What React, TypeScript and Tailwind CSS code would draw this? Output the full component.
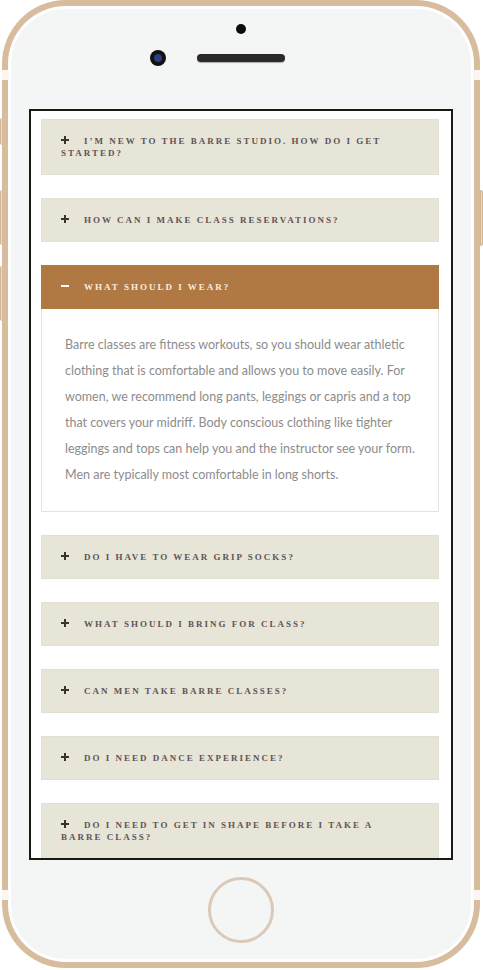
import React from "react";

const items = [
  "I’M NEW TO THE BARRE STUDIO. HOW DO I GET STARTED?",
  "HOW CAN I MAKE CLASS RESERVATIONS?",
  "WHAT SHOULD I WEAR?",
  "DO I HAVE TO WEAR GRIP SOCKS?",
  "WHAT SHOULD I BRING FOR CLASS?",
  "CAN MEN TAKE BARRE CLASSES?",
  "DO I NEED DANCE EXPERIENCE?",
  "DO I NEED TO GET IN SHAPE BEFORE I TAKE A BARRE CLASS?",
];

function Plus({ color }: { color: string }) {
  return (
    <svg width="8" height="8" viewBox="0 0 8 8" className="inline-block mr-[15px] align-[0px]">
      <rect x="0" y="3" width="8" height="2" fill={color} />
      <rect x="3" y="0" width="2" height="8" fill={color} />
    </svg>
  );
}

function Minus({ color }: { color: string }) {
  return (
    <svg width="8" height="8" viewBox="0 0 8 8" className="inline-block mr-[15px] align-[0px]">
      <rect x="0" y="3" width="8" height="2" fill={color} />
    </svg>
  );
}

export default function App() {
  return (
    <div className="relative w-[483px] h-[970px] bg-white overflow-hidden">
      {/* side buttons */}
      <div className="absolute left-0 top-[118px] w-[3px] h-[27px] rounded-l-[2px] bg-[#e9dccb] border border-[#d2b592]" />
      <div className="absolute left-0 top-[190px] w-[3px] h-[55px] rounded-l-[2px] bg-[#e9dccb] border border-[#d2b592]" />
      <div className="absolute left-0 top-[266px] w-[3px] h-[55px] rounded-l-[2px] bg-[#e9dccb] border border-[#d2b592]" />
      <div className="absolute right-0 top-[190px] w-[3px] h-[56px] rounded-r-[2px] bg-[#e9dccb] border border-[#d2b592]" />

      {/* frame */}
      <div className="absolute left-[2px] top-0 w-[478px] h-[968px] rounded-[64px] bg-[#d7bd9e] p-[6px]">
        <div className="w-full h-full rounded-[58px] bg-white p-[3px]">
          <div className="w-full h-full rounded-[55px] bg-[#f4f6f5] flex flex-col items-center">
            {/* dot */}
            <div className="mt-[15px] w-[10px] h-[10px] rounded-full bg-[#0c0c0c]" />
            {/* camera + speaker */}
            <div className="mt-[16px] flex items-center h-[16px]">
              <div className="w-[16px] h-[16px] rounded-full bg-[#111] flex items-center justify-center">
                <div className="w-[8px] h-[8px] rounded-full bg-[#2b3f7a]" />
              </div>
              <div className="w-[31px]" />
              <div className="w-[88px] h-[8px] rounded-full bg-[#2a2a2a] shadow-[0_1px_1px_rgba(0,0,0,0.3)]" />
              <div className="w-[47px]" />
            </div>
            {/* screen */}
            <div className="mt-[43px] w-[424px] h-[751px] border-2 border-[#19190f] bg-white overflow-hidden">
              <div className="pl-[10px] pr-[12px] pt-[8px] flex flex-col gap-[23px]">
                {items.map((q, i) => {
                  const active = i === 2;
                  return (
                    <div key={i} className="flex flex-col">
                      <div
                        className={
                          active
                            ? "bg-[#b07944] pl-[19px] pr-[26px] py-[15px] text-[9px] leading-[12px] font-bold tracking-[2px] text-[#f6ede0] border border-[#b07944]"
                            : "bg-[#e7e4d8] pl-[19px] pr-[26px] py-[15px] text-[9px] leading-[12px] font-bold tracking-[2px] text-[#5f5454] border border-[#e2dfd3]"
                        }
                        style={{ fontFamily: '"Liberation Serif", "Times New Roman", serif' }}
                      >
                        {active ? <Minus color="#ffffff" /> : <Plus color="#3b3131" />}
                        {q}
                      </div>
                      {active && (
                        <div
                          className="border border-t-0 border-[#e3e3e3] bg-white pl-[23px] pr-[12px] pt-[23px] pb-[23px] text-[12.5px] leading-[26px] text-[#8c8c8c]"
                          style={{ fontFamily: 'Lato, "Liberation Sans", sans-serif' }}
                        >
                          Barre classes are fitness workouts, so you should wear athletic clothing that is comfortable and allows you to move easily. For women, we recommend long pants, leggings or capris and a top that covers your midriff. Body conscious clothing like tighter leggings and tops can help you and the instructor see your form. Men are typically most comfortable in long shorts.
                        </div>
                      )}
                    </div>
                  );
                })}
              </div>
            </div>
            {/* home button */}
            <div className="mt-[17px] w-[66px] h-[66px] rounded-full border-[3px] border-[#d9c9b9]" />
          </div>
        </div>
      </div>

      {/* antenna bands */}
      <div className="absolute left-[2px] top-[70px] w-[7px] h-[10px] bg-[#faf6f1]" />
      <div className="absolute right-[3px] top-[70px] w-[7px] h-[10px] bg-[#faf6f1]" />
      <div className="absolute left-[2px] top-[890px] w-[7px] h-[10px] bg-[#faf6f1]" />
      <div className="absolute right-[3px] top-[890px] w-[7px] h-[10px] bg-[#faf6f1]" />
    </div>
  );
}
